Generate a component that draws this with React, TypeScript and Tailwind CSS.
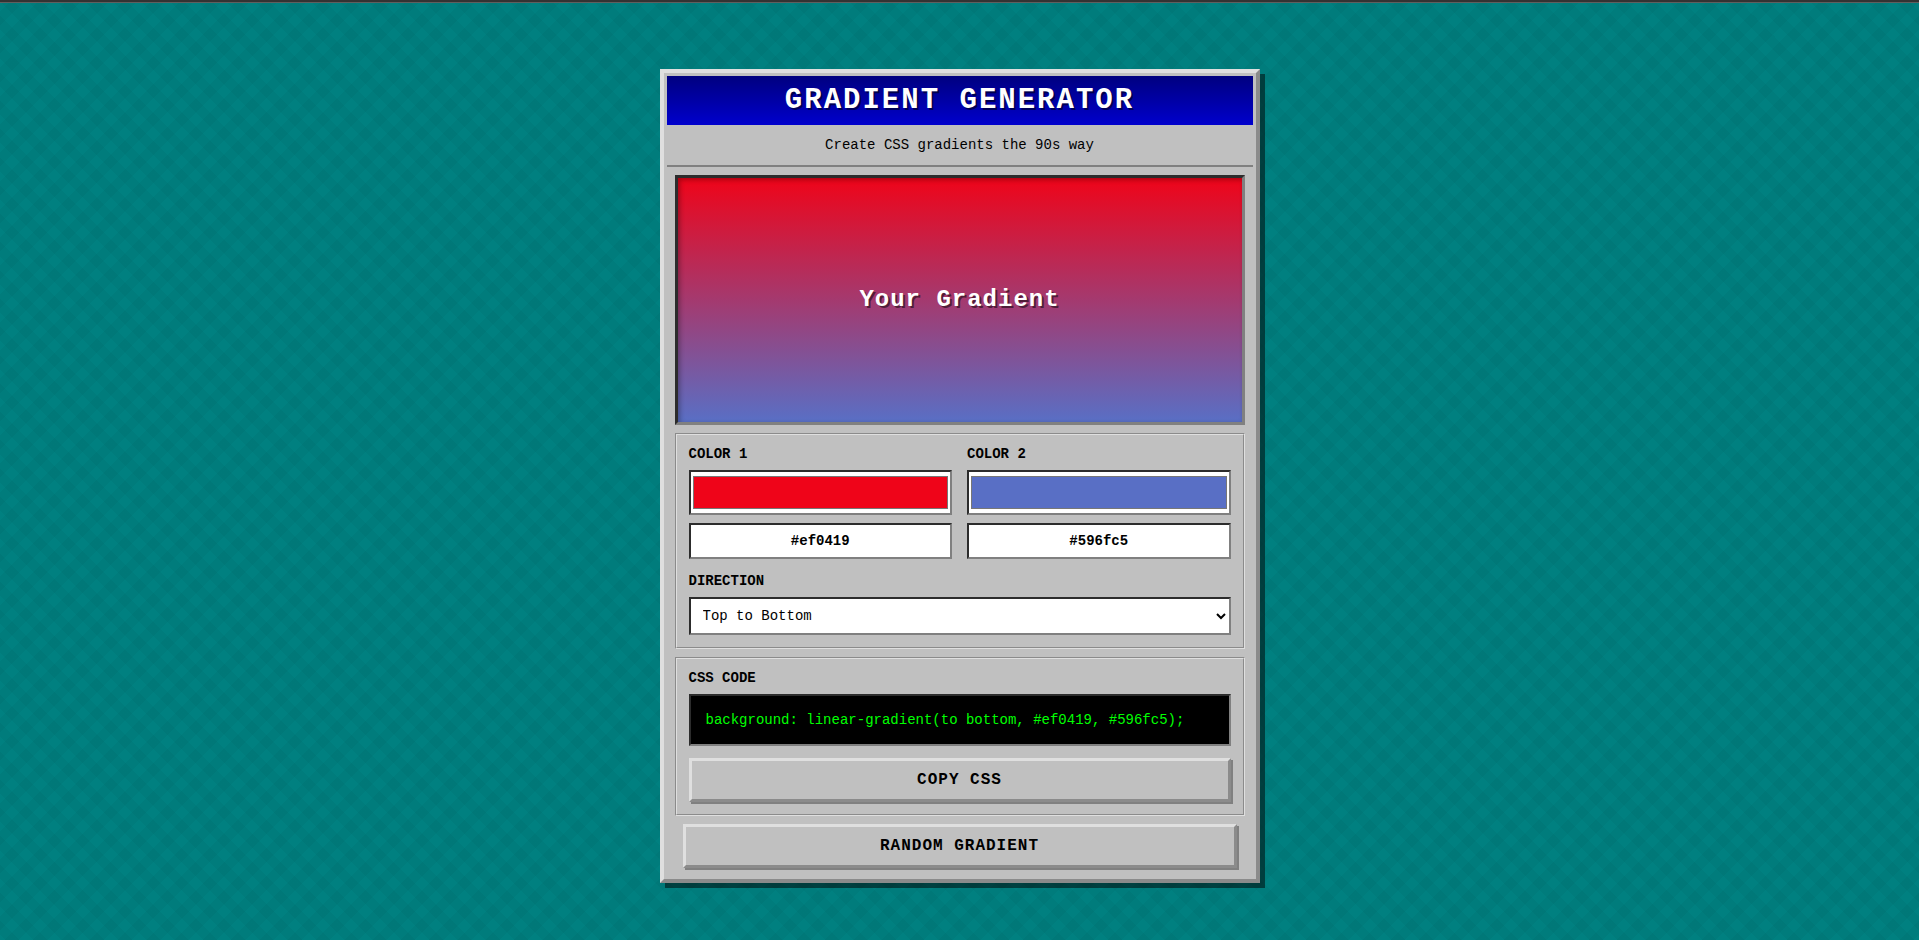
import { useState } from 'react';

const DIRECTIONS = [
  { value: 'to bottom', label: 'Top to Bottom' },
  { value: 'to top', label: 'Bottom to Top' },
  { value: 'to right', label: 'Left to Right' },
  { value: 'to left', label: 'Right to Left' },
  { value: 'to bottom right', label: 'Diagonal ↘' },
  { value: 'to top right', label: 'Diagonal ↗' },
];

const LABEL = 'mb-2 block text-sm leading-[15px] font-bold uppercase';
const PANEL = 'mx-2 mt-2 border-2 border-[#dfdfdf] p-3 [border-style:groove]';
const FIELD = 'block w-full rounded-none border-2 border-[#808080] bg-white text-sm text-black [border-style:inset]';
const BUTTON =
  'block border-3 border-[#dfdfdf] bg-[#c0c0c0] py-[10px] text-base leading-[18px] font-bold tracking-[1px] uppercase [border-style:outset] shadow-[2px_2px_0_#808080] active:[border-style:inset]';

function randomHex() {
  return '#' + Math.floor(Math.random() * 0x1000000).toString(16).padStart(6, '0');
}

type ColorFieldProps = {
  id: string;
  label: string;
  value: string;
  onChange: (value: string) => void;
};

function ColorField({ id, label, value, onChange }: ColorFieldProps) {
  return (
    <div>
      <label htmlFor={id} className={LABEL}>
        {label}
      </label>
      <input
        id={id}
        type="color"
        value={value}
        onChange={(e) => onChange(e.target.value)}
        className={`${FIELD} h-[45px] cursor-pointer p-0`}
      />
      <input
        type="text"
        aria-label={`${label} hex value`}
        value={value}
        onChange={(e) => onChange(e.target.value)}
        className={`${FIELD} mt-2 h-9 p-2 text-center font-bold`}
      />
    </div>
  );
}

export default function App() {
  const [color1, setColor1] = useState('#ef0419');
  const [color2, setColor2] = useState('#596fc5');
  const [direction, setDirection] = useState('to bottom');

  const gradient = `linear-gradient(${direction}, ${color1}, ${color2})`;
  const css = `background: ${gradient};`;

  const randomize = () => {
    setColor1(randomHex());
    setColor2(randomHex());
  };

  return (
    <div className="flex min-h-screen flex-col bg-[#008080] bg-[repeating-linear-gradient(45deg,transparent,transparent_10px,rgba(0,0,0,0.03)_10px,rgba(0,0,0,0.03)_20px),repeating-linear-gradient(-45deg,transparent,transparent_10px,rgba(0,0,0,0.03)_10px,rgba(0,0,0,0.03)_20px)] bg-[length:100%_calc(100%_+_9px)] font-['Courier_New','Liberation_Mono',monospace] text-black">
      <div className="h-[3px] border-b border-[#5f5f5f] bg-[#333333]" />
      <main className="flex flex-1 items-center justify-center px-5 pt-[66px] pb-[57px]">
        <div className="w-full max-w-[600px] border-4 border-[#dfdfdf] bg-[#c0c0c0] p-[3px] [border-style:outset] shadow-[5px_5px_0_rgba(0,0,0,0.5)]">
          <h1 className="bg-linear-to-b from-[#000080] to-[#0000cd] py-2 text-center text-[29px] leading-[33px] font-bold tracking-[2px] text-white uppercase [text-shadow:2px_2px_0_rgba(0,0,0,0.5)]">
            Gradient Generator
          </h1>
          <p className="border-b-2 border-[#808080] py-3 text-center text-sm leading-4">
            Create CSS gradients the 90s way
          </p>

          <div
            className="mx-2 mt-2 flex h-[250px] items-center justify-center border-3 border-[#808080] [border-style:inset] shadow-[inset_2px_2px_5px_rgba(0,0,0,0.3)]"
            style={{ background: gradient }}
          >
            <span className="text-2xl font-bold tracking-[1px] text-white [text-shadow:2px_2px_0_rgba(0,0,0,0.5)]">
              Your Gradient
            </span>
          </div>

          <section className={PANEL}>
            <div className="mb-[15px] grid grid-cols-2 gap-[15px]">
              <ColorField id="color1" label="Color 1" value={color1} onChange={setColor1} />
              <ColorField id="color2" label="Color 2" value={color2} onChange={setColor2} />
            </div>
            <label htmlFor="direction" className={LABEL}>
              Direction
            </label>
            <select
              id="direction"
              value={direction}
              onChange={(e) => setDirection(e.target.value)}
              className={`${FIELD} h-[38px] p-2`}
            >
              {DIRECTIONS.map((d) => (
                <option key={d.value} value={d.value}>
                  {d.label}
                </option>
              ))}
            </select>
          </section>

          <section className={PANEL}>
            <h2 className={LABEL}>CSS Code</h2>
            <pre className="border-2 border-[#808080] bg-black p-[15px] font-['Courier_New','Liberation_Mono',monospace] text-sm leading-[18px] break-words whitespace-pre-wrap text-[#00ff00] [border-style:inset]">
              {css}
            </pre>
            <button
              type="button"
              onClick={() => navigator.clipboard?.writeText(css)}
              className={`${BUTTON} mt-3 w-full`}
            >
              Copy CSS
            </button>
          </section>

          <div className="px-4 py-2">
            <button type="button" onClick={randomize} className={`${BUTTON} w-full`}>
              Random Gradient
            </button>
          </div>
        </div>
      </main>
    </div>
  );
}
